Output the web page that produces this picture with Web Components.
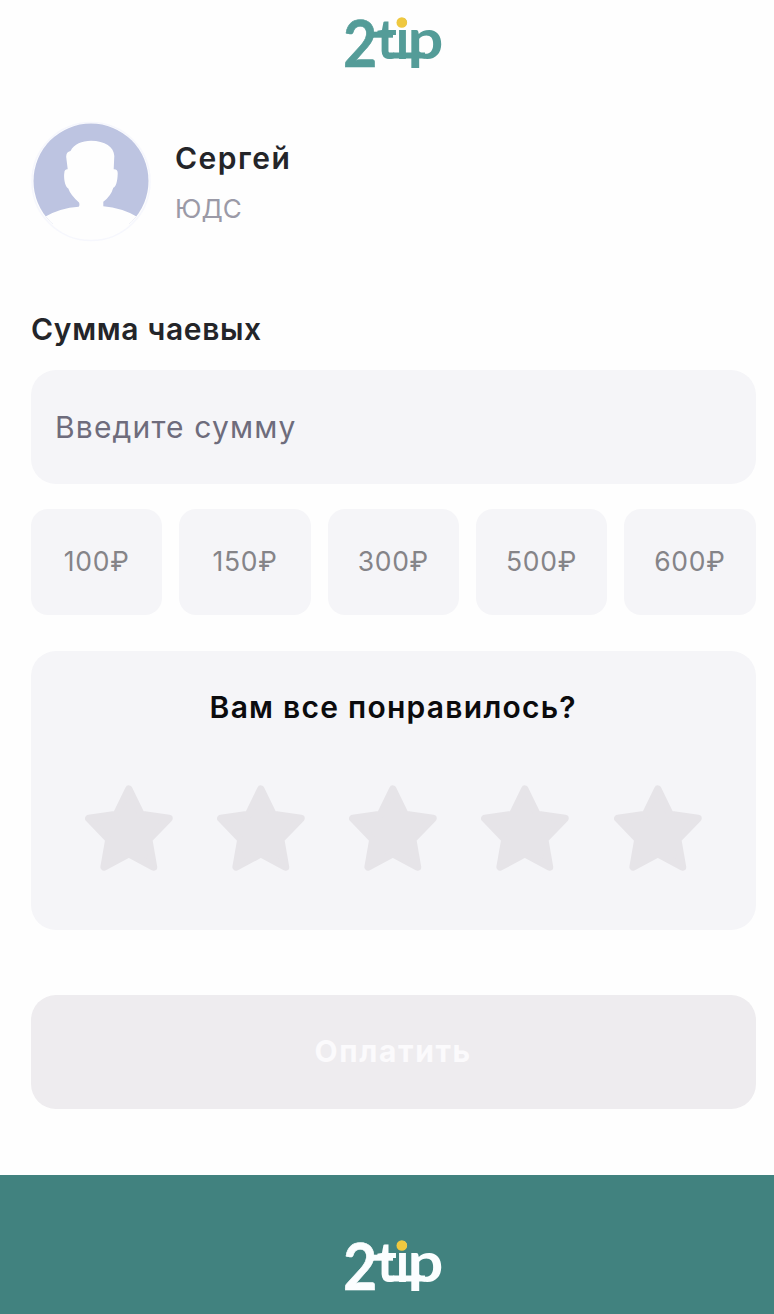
<!DOCTYPE html>
<html lang="ru">
<head>
<meta charset="utf-8">
<title>2tip</title>
<style>
  body {
    margin: 0;
    background: #fefefe;
    font-family: Inter, "Noto Sans", sans-serif;
  }
</style>
</head>
<body>
<tip-page>
  <tip-logo slot="header"></tip-logo>
  <tip-profile>
    <span slot="name">Сергей</span>
    <span slot="company">ЮДС</span>
  </tip-profile>
  <tip-amount>
    <span slot="label">Сумма чаевых</span>
    <span slot="placeholder">Введите сумму</span>
    <tip-chip>100₽</tip-chip>
    <tip-chip>150₽</tip-chip>
    <tip-chip>300₽</tip-chip>
    <tip-chip>500₽</tip-chip>
    <tip-chip>600₽</tip-chip>
  </tip-amount>
  <tip-rating>Вам все понравилось?</tip-rating>
  <tip-button>Оплатить</tip-button>
  <tip-logo slot="footer" class="light"></tip-logo>
</tip-page>

<script>
const define = (name, html) => {
  const template = document.createElement('template');
  template.innerHTML = html;

  window.customElements.define(name, class extends HTMLElement {
    constructor() {
      super();

      this.attachShadow({ mode: 'open' });
      this.shadowRoot.appendChild(template.content.cloneNode(true));
    }
  });
};

define('tip-logo', `
  <style>
    :host {
      display: block;
      width: 100px;
      height: 54px;
      color: #549c98;
    }

    :host(.light) {
      color: #fbfeff;
    }

    svg {
      display: block;
      overflow: visible;
    }

    text {
      font-family: Lato, sans-serif;
      font-weight: 700;
    }
  </style>

  <svg width="100" height="54" viewBox="0 0 100 54" fill="currentColor">
    <text transform="translate(0 52) scale(.91 1)" font-size="65" stroke="currentColor" stroke-width=".6">2</text>
    <text y="43.5" font-size="55"><tspan x="33.5">t</tspan><tspan x="52.5">i</tspan></text>
    <text transform="translate(64.5 43.5) scale(1.15 1)" font-size="55">p</text>
    <rect x="29" y="16.7" width="21" height="6"/>
    <rect x="44" y="37.5" width="38" height="6"/>
    <circle cx="58.8" cy="7.5" r="5.3" fill="#efc83f"/>
  </svg>
`);

define('tip-profile', `
  <style>
    :host {
      display: flex;
      gap: 24px;
      height: 120px;
    }

    svg {
      display: block;
    }

    .text {
      padding-top: 18px;
    }

    .name {
      font-size: 30px;
      line-height: 38px;
      font-weight: 600;
      letter-spacing: 1.5px;
      color: #242529;
    }

    .company {
      margin-top: 14px;
      font-size: 26px;
      line-height: 36px;
      color: #9b9aa7;
    }
  </style>

  <svg width="120" height="121" viewBox="0 0 120 121">
    <defs><clipPath id="disc"><circle cx="60" cy="60" r="57.5"/></clipPath></defs>
    <circle cx="60" cy="60.5" r="59" fill="#fefefe" stroke="#f6f7fd" stroke-width="1.5"/>
    <g clip-path="url(#disc)">
      <path fill="#bdc4e1" d="M0 0H120V103H0Z"/>
      <path fill="#fefefe" d="M14 95.7Q29 87 47.7 85.7Q49 84 48 81.5Q39.5 74 37.3 67.5C34 66 32.5 57 33.3 52Q33.5 48 36.7 48.3L35.2 36Q35 31 39.5 30C43 23 51 19.7 60 19.7C74 19.7 83 26 83.3 35L82.7 48.3Q87 48 86.7 53C86.5 60 85 66 82.3 66.7Q80 75 72.3 80.7V85.3Q91 87 106 95.7L112 122H8Z"/>
    </g>
  </svg>
  <div class="text">
    <div class="name"><slot name="name"></slot></div>
    <div class="company"><slot name="company"></slot></div>
  </div>
`);

define('tip-chip', `
  <style>
    :host {
      display: flex;
      align-items: center;
      justify-content: center;
      box-sizing: border-box;
      height: 106px;
      padding-bottom: 3px;
      border-radius: 17px;
      background: #f5f5f8;
      font-size: 26.5px;
      letter-spacing: .7px;
      color: #858488;
    }
  </style>

  <slot></slot>
`);

define('tip-amount', `
  <style>
    :host {
      display: block;
      margin-top: 68px;
    }

    .label {
      font-size: 30px;
      line-height: 40px;
      font-weight: 600;
      letter-spacing: .65px;
      color: #242529;
    }

    .input {
      display: flex;
      align-items: center;
      box-sizing: border-box;
      height: 114px;
      margin-top: 21px;
      padding: 0 24px;
      border-radius: 25px;
      background: #f5f5f8;
      font-size: 30px;
      letter-spacing: 1.15px;
      color: #6e6c7c;
    }

    .chips {
      display: grid;
      grid-template-columns: repeat(5, 1fr);
      gap: 17px;
      margin-top: 25px;
    }
  </style>

  <div class="label"><slot name="label"></slot></div>
  <div class="input"><slot name="placeholder"></slot></div>
  <div class="chips"><slot></slot></div>
`);

define('tip-star', `
  <style>
    :host {
      display: block;
    }

    svg {
      display: block;
    }
  </style>

  <svg width="88" height="87" viewBox="0 0 88 87">
    <path fill="#e6e4e8" stroke="#e6e4e8" stroke-width="7.4" stroke-linejoin="round" d="M43.8 4L56.2 29.5L84 33.5L63.7 54.5L68.5 82L43.8 68.8L19.1 82L23.9 54.5L3.8 33.5L31.4 29.5Z"/>
  </svg>
`);

define('tip-rating', `
  <style>
    :host {
      display: block;
      box-sizing: border-box;
      height: 279px;
      margin-top: 35.5px;
      padding: 36px 54px 0;
      border-radius: 25px;
      background: #f5f5f8;
    }

    .title {
      text-align: center;
      font-size: 30px;
      line-height: 40px;
      font-weight: 600;
      letter-spacing: 1.25px;
      color: #0b0b0d;
      white-space: nowrap;
    }

    .stars {
      display: flex;
      justify-content: space-between;
      margin-top: 58px;
    }
  </style>

  <div class="title"><slot></slot></div>
  <div class="stars">
    <tip-star></tip-star>
    <tip-star></tip-star>
    <tip-star></tip-star>
    <tip-star></tip-star>
    <tip-star></tip-star>
  </div>
`);

define('tip-button', `
  <style>
    :host {
      display: flex;
      align-items: center;
      justify-content: center;
      box-sizing: border-box;
      height: 114px;
      margin-top: 65.5px;
      padding-bottom: 2px;
      border-radius: 25px;
      background: #eeecef;
      font-size: 30px;
      font-weight: 700;
      letter-spacing: 1.6px;
      color: #fbfafc;
    }
  </style>

  <slot></slot>
`);

define('tip-page', `
  <style>
    :host {
      display: flex;
      flex-direction: column;
      height: 1314px;
      overflow: hidden;
    }

    header {
      display: flex;
      justify-content: center;
      padding: 15px 0 52px 12px;
    }

    main {
      flex: 1;
      padding: 0 18.5px 0 31px;
    }

    footer {
      display: flex;
      justify-content: center;
      box-sizing: border-box;
      height: 139px;
      padding: 63px 0 0 12px;
      background: #41827f;
    }
  </style>

  <header><slot name="header"></slot></header>
  <main><slot></slot></main>
  <footer><slot name="footer"></slot></footer>
`);
</script>
</body>
</html>
